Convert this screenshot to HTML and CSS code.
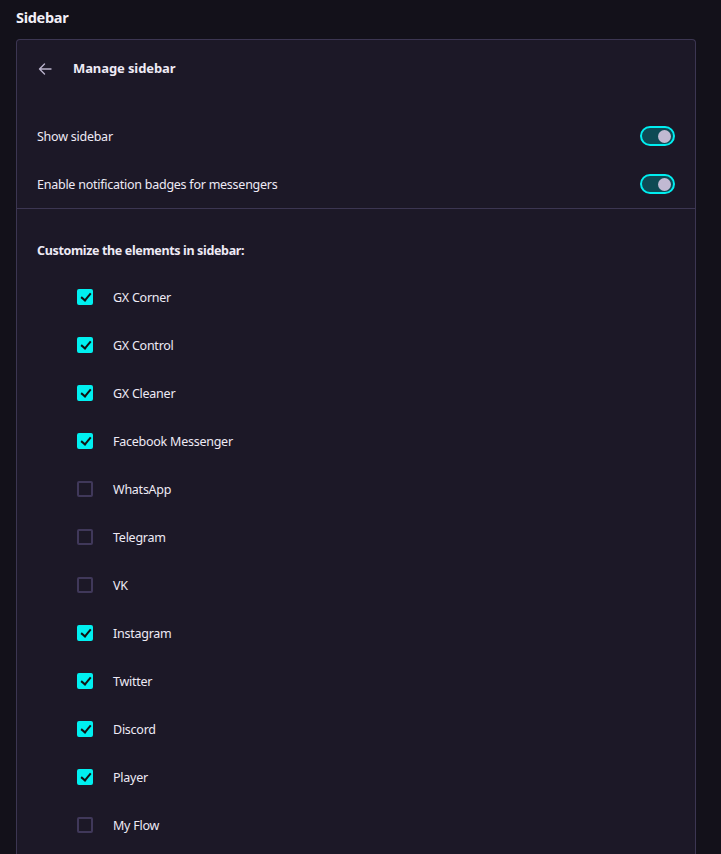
FILE: index.html
```html
<!DOCTYPE html>
<html>
<head>
<meta charset="utf-8">
<link rel="stylesheet" href="styles.css">
</head>
<body>
<h1 class="title">Sidebar</h1>
<div class="card">
  <div class="header">
    <svg class="back" width="16" height="16" viewBox="0 0 16 16"><path d="M14 8H2.5M7.5 3L2.5 8l5 5" fill="none" stroke="#b9b2cc" stroke-width="1.4" stroke-linecap="round" stroke-linejoin="round"/></svg>
    <span class="header-text">Manage sidebar</span>
  </div>
  <div class="toggles">
    <div class="row"><span>Show sidebar</span><span class="toggle"><span class="knob"></span></span></div>
    <div class="row"><span>Enable notification badges for messengers</span><span class="toggle"><span class="knob"></span></span></div>
  </div>
  <div class="section">
    <div class="section-title">Customize the elements in sidebar:</div>
    <ul class="items">
      <li><span class="cb on"></span>GX Corner</li>
      <li><span class="cb on"></span>GX Control</li>
      <li><span class="cb on"></span>GX Cleaner</li>
      <li><span class="cb on"></span>Facebook Messenger</li>
      <li><span class="cb"></span>WhatsApp</li>
      <li><span class="cb"></span>Telegram</li>
      <li><span class="cb"></span>VK</li>
      <li><span class="cb on"></span>Instagram</li>
      <li><span class="cb on"></span>Twitter</li>
      <li><span class="cb on"></span>Discord</li>
      <li><span class="cb on"></span>Player</li>
      <li><span class="cb"></span>My Flow</li>
    </ul>
  </div>
</div>
</body>
</html>
```
FILE: styles.css
```css
html, body {
  margin: 0;
  padding: 0;
  background: #13111a;
  height: 100%;
  overflow: hidden;
}
body {
  font-family: "Noto Sans", "Open Sans", sans-serif;
  font-size: 12.5px;
  letter-spacing: -0.25px;
  color: #eeeaf5;
  padding: 0 25px 0 16px;
}
.title {
  margin: 0;
  font-size: 14.5px;
  letter-spacing: -0.3px;
  font-weight: 700;
  height: 39px;
  line-height: 35px;
  color: #f2eff7;
}
.card {
  background: #1c1827;
  border: 1px solid #3c3652;
  border-bottom: none;
  border-radius: 4px 4px 0 0;
  width: 680px;
  box-sizing: border-box;
  height: 900px;
}
.header {
  display: flex;
  align-items: center;
  height: 56px;
  padding-left: 20px;
}
.back { margin-right: 20px; margin-top: 2px; }
.header-text { font-weight: 700; font-size: 13px; letter-spacing: -0.1px; }
.toggles {
  padding: 16px 20px 0 20px;
  border-bottom: 1px solid #3c3652;
}
.row {
  display: flex;
  justify-content: space-between;
  align-items: center;
  height: 48px;
}
.toggle {
  width: 31px;
  height: 16px;
  border: 2px solid #00eef0;
  border-radius: 10px;
  background: #0e4a54;
  position: relative;
  box-sizing: content-box;
}
.knob {
  position: absolute;
  right: 2px;
  top: 1.5px;
  width: 13px;
  height: 13px;
  border-radius: 50%;
  background: #c1b9d2;
}
.section { padding: 20px 20px 0 20px; }
.section-title {
  font-weight: 700;
  height: 44px;
  line-height: 44px;
  letter-spacing: -0.35px;
}
.items {
  list-style: none;
  margin: 0;
  padding: 0 0 0 40px;
}
.items li {
  display: flex;
  align-items: center;
  height: 48px;
}
.cb {
  width: 16px;
  height: 16px;
  box-sizing: border-box;
  border: 2px solid #40385a;
  border-radius: 2px;
  margin-right: 20px;
  position: relative;
}
.cb.on {
  background: #00f0f0;
  border-color: #00f0f0;
}
.cb.on::after {
  content: "";
  position: absolute;
  left: 3.5px;
  top: 0px;
  width: 4px;
  height: 8px;
  border-right: 2px solid #111;
  border-bottom: 2px solid #111;
  transform: rotate(40deg);
}
```
